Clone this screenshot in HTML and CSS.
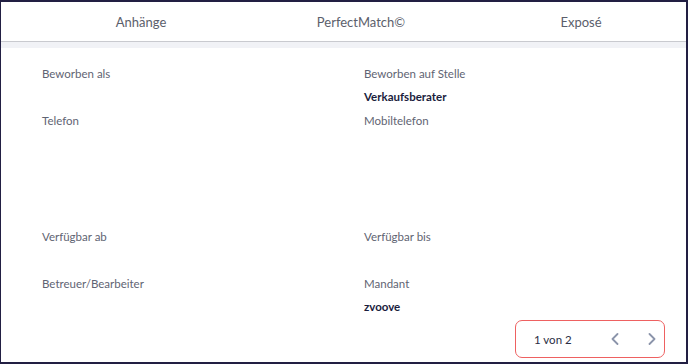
FILE: index.html
```html
<!DOCTYPE html>
<html lang="de">
<head>
    <meta charset="UTF-8">
    <meta name="viewport" content="width=device-width, initial-scale=1.0">
    <title>Bewerbung</title>
    <link rel="stylesheet" href="styles.css">
</head>
<body>
    <div class="frame">
        <nav class="tabs">
            <a class="tab">Anhänge</a>
            <a class="tab">PerfectMatch©</a>
            <a class="tab">Exposé</a>
        </nav>
        <div class="tabs-shadow"></div>

        <div class="fields">
            <div class="field">
                <div class="field-label">Beworben als</div>
                <div class="field-value"></div>
            </div>
            <div class="field">
                <div class="field-label">Beworben auf Stelle</div>
                <div class="field-value">Verkaufsberater</div>
            </div>
            <div class="field field-tall">
                <div class="field-label">Telefon</div>
                <div class="field-value"></div>
            </div>
            <div class="field field-tall">
                <div class="field-label">Mobiltelefon</div>
                <div class="field-value"></div>
            </div>
            <div class="field">
                <div class="field-label">Verfügbar ab</div>
                <div class="field-value"></div>
            </div>
            <div class="field">
                <div class="field-label">Verfügbar bis</div>
                <div class="field-value"></div>
            </div>
            <div class="field">
                <div class="field-label">Betreuer/Bearbeiter</div>
                <div class="field-value"></div>
            </div>
            <div class="field">
                <div class="field-label">Mandant</div>
                <div class="field-value">zvoove</div>
            </div>
        </div>

        <div class="footer">
            <div class="pager">
                <span class="pager-text">1 von 2</span>
                <button class="pager-btn pager-prev" type="button">
                    <svg width="8" height="12" viewBox="0 0 8 12"><path d="M6.5 1 L1.5 6 L6.5 11" fill="none" stroke="#8b94aa" stroke-width="1.8" stroke-linecap="round" stroke-linejoin="round"/></svg>
                </button>
                <button class="pager-btn" type="button">
                    <svg width="8" height="12" viewBox="0 0 8 12"><path d="M1.5 1 L6.5 6 L1.5 11" fill="none" stroke="#8b94aa" stroke-width="1.8" stroke-linecap="round" stroke-linejoin="round"/></svg>
                </button>
            </div>
        </div>
    </div>
</body>
</html>
```

FILE: styles.css
```css
body {
    margin: 0;
    font-family: Lato, "Noto Sans", sans-serif;
    background-color: #fff;
}

.frame {
    width: 688px;
    height: 364px;
    box-sizing: border-box;
    border-style: solid;
    border-color: #221f43;
    border-width: 2px 2px 2px 1px;
    display: flex;
    flex-direction: column;
    overflow: hidden;
}

.tabs {
    display: flex;
    height: 39px;
    padding-left: 30px;
    border-bottom: 1px solid #c9cacf;
}
.tab {
    width: 220px;
    flex: none;
    display: flex;
    align-items: center;
    justify-content: center;
    font-size: 13px;
    color: #5b5e6b;
    cursor: pointer;
}
.tabs-shadow {
    height: 6px;
    background-color: #f1f2f6;
}

.fields {
    display: grid;
    grid-template-columns: 322px 1fr;
    row-gap: 1px;
    padding: 14px 0 0 41px;
}
.field-label,
.field-value {
    font-size: 11.5px;
    line-height: 23px;
    height: 23px;
}
.field-label {
    color: #5f6473;
}
.field-value {
    color: #1a1d3d;
    font-weight: bold;
}
.field-tall {
    min-height: 115px;
}

.footer {
    margin-top: auto;
    display: flex;
    justify-content: flex-end;
    padding: 0 21px 4px 0;
}
.pager {
    width: 150px;
    height: 38px;
    box-sizing: border-box;
    border: 1.5px solid #ee6161;
    border-radius: 7px;
    display: flex;
    align-items: center;
    padding-left: 18px;
}
.pager-text {
    font-size: 11.5px;
    color: #2b2e45;
    width: 70px;
}
.pager-btn {
    border: none;
    background: none;
    padding: 0;
    width: 24px;
    height: 24px;
    display: flex;
    align-items: center;
    justify-content: center;
    cursor: pointer;
}
.pager-prev {
    margin-right: 13px;
}
```
